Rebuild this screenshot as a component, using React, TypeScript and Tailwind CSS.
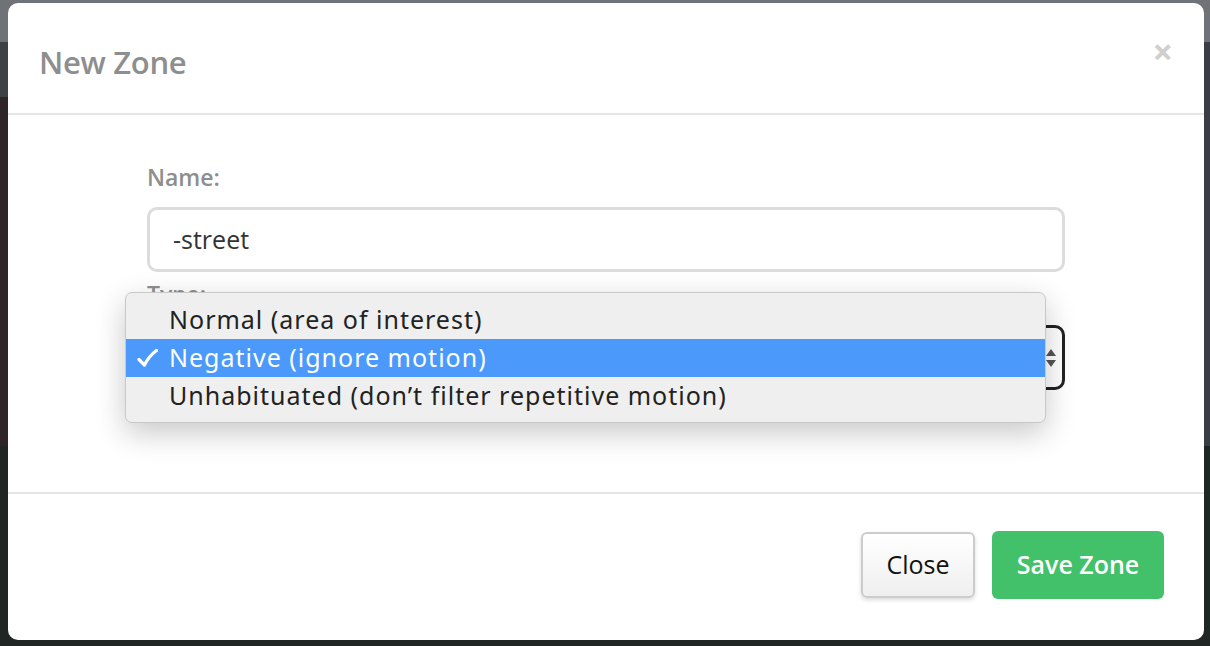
import React from "react";

export default function App() {
  const font = { fontFamily: '"Source Sans Pro", "Open Sans", "Noto Sans", sans-serif' };
  return (
    <div
      className="relative w-[1210px] h-[646px] overflow-hidden bg-[#2d2528]"
      style={font}
    >
      {/* background decoration */}
      <div className="absolute inset-x-0 top-0 h-[42px] bg-[#6f7377]" />
      <div className="absolute left-0 top-[42px] w-[20px] h-[55px] bg-[#3d4246]" />
      <div className="absolute right-0 top-[42px] w-[20px] h-[604px] bg-[#3a3d42]" />
      <div className="absolute left-0 bottom-0 w-full h-[200px] bg-[#1f2624]" />
      <div className="absolute left-0 top-[97px] w-[20px] h-[340px] bg-[#2f2428]" />

      {/* modal */}
      <div className="relative ml-[8px] mt-[3px] w-[1196px] h-[637px] rounded-[10px] bg-white flex flex-col">
        {/* header */}
        <div className="h-[112px] flex items-start justify-between pl-[31px] pr-[31px] border-b-2 border-[#e5e5e5]">
          <div className="mt-[39px] text-[31px] leading-[40px] font-semibold text-[#8e8e8e] tracking-[-0.3px]">
            New Zone
          </div>
          <div className="mt-[31px] text-[36px] leading-[36px] font-bold text-[#cfcfcf]">×</div>
        </div>

        {/* body */}
        <div className="relative h-[377px] px-[139px] pt-[48px]">
          <div className="text-[23px] leading-[28px] font-semibold text-[#8e8e8e]">Name:</div>
          <div className="mt-[16px] h-[65px] rounded-[10px] border-[3px] border-[#dcdcdc] flex items-center pl-[23px] text-[25px] text-[#333]">
            -street
          </div>
          <div className="mt-[8px] text-[23px] leading-[28px] font-semibold text-[#8e8e8e]">Type:</div>
          <div className="mt-[17px] h-[65px] rounded-[10px] border-[3px] border-[#222] flex items-center justify-end pr-[5px]">
            <svg width="12" height="24" viewBox="0 0 12 24">
              <path d="M6 3 L11 10 L1 10 Z" fill="#555" />
              <path d="M6 21 L11 14 L1 14 Z" fill="#555" />
            </svg>
          </div>

          {/* native dropdown menu */}
          <div
            className="absolute left-[117px] top-[177px] w-[921px] h-[131px] rounded-[7px] bg-[#efefef] border border-[#c8c8c8] shadow-[0_10px_30px_rgba(0,0,0,0.22)] pt-[8px] text-[25px] tracking-[1px] text-[#222]"
            style={{ fontFamily: '"Noto Sans", "Open Sans", sans-serif' }}
          >
            <div className="h-[38px] flex items-center pl-[43px]">Normal (area of interest)</div>
            <div className="h-[38px] flex items-center bg-[#4a99fb] text-white">
              <span className="w-[43px] pl-[11px] flex items-center">
                <svg width="21" height="18" viewBox="0 0 21 18">
                  <path
                    d="M2 10.5 L7.5 16 Q12 7 19.5 1.5"
                    fill="none"
                    stroke="white"
                    strokeWidth="3.2"
                    strokeLinecap="round"
                    strokeLinejoin="round"
                  />
                </svg>
              </span>
              <span>Negative (ignore motion)</span>
            </div>
            <div className="h-[38px] flex items-center pl-[43px]">Unhabituated (don’t filter repetitive motion)</div>
          </div>
        </div>

        {/* footer */}
        <div className="border-t-2 border-[#e5e5e5] flex-1 flex items-center justify-end gap-[17px] pr-[40px] pb-[4px]">
          <button className="w-[114px] h-[66px] rounded-[6px] border-2 border-[#cccccc] bg-gradient-to-b from-white to-[#efefef] shadow-[0_2px_4px_rgba(0,0,0,0.15)] text-[25px] text-[#111]">
            Close
          </button>
          <button className="w-[172px] h-[68px] rounded-[6px] bg-[#43c16a] text-[25px] font-semibold text-white">
            Save Zone
          </button>
        </div>
      </div>
    </div>
  );
}
